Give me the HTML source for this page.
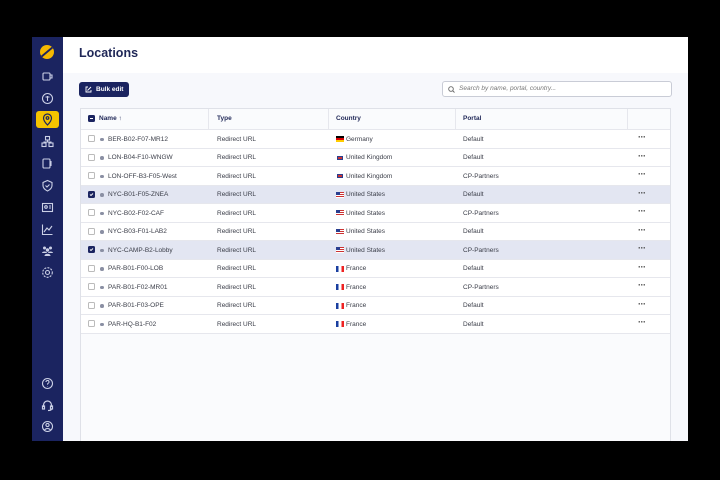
<!DOCTYPE html>
<html><head><meta charset="utf-8">
<style>
*{margin:0;padding:0;box-sizing:border-box}
body{width:720px;height:480px;background:#000;position:relative;overflow:hidden;font-family:"Liberation Sans",sans-serif;}
#side{position:absolute;left:32px;top:37px;width:31px;height:404px;background:#1b2460;}
#main{position:absolute;left:63px;top:37px;width:625px;height:404px;background:#f7f8fc;}
#hdr{position:absolute;left:0;top:0;width:625px;height:36px;background:#fff;}
h1{position:absolute;left:16px;top:9px;font-size:12.5px;font-weight:bold;color:#1f2757;}
.ic{position:absolute;left:9px;width:13px;height:13px;opacity:.9}
.btn{position:absolute;left:16px;top:45px;width:50px;height:15px;background:#1b2460;border-radius:3px;color:#fff;font-size:6.5px;font-weight:bold;line-height:15px;padding-left:17px}
.search{position:absolute;left:379px;top:44px;width:230px;height:16px;background:#fff;border:1px solid #c9ccd6;border-radius:3px;font-size:6.5px;font-style:italic;color:#777;line-height:14px;padding-left:16px}
#tbl{position:absolute;left:17px;top:71px;width:591px;height:333px;border:1px solid #dfe1e8;border-bottom:none;background:#fafbfd}
.row{position:absolute;left:0;width:589px;height:18.5px;border-bottom:1px solid #e6e7ed;background:#fff;font-size:6.5px;color:#3a3d48;}
.row span{position:absolute;top:5.5px}
.sel{background:#e3e6f2}
.th{background:#fafbfd;font-weight:bold;color:#1f2757;height:21px}
.vd{position:absolute;top:0;width:1px;height:223px;background:#e6e7ed}
.cb{position:absolute;left:7px;top:5px;width:7px;height:7px;border:1px solid #bbb;border-radius:1.5px;background:#fff}
.cb.on{background:#1b2460;border-color:#1b2460}
.dot{position:absolute;left:19px;top:7.5px;width:3.5px;height:3.5px;border-radius:50%;background:#8a8fa3}
.fl{position:absolute;left:255px;top:6px;width:8px;height:6px}
.el{position:absolute;left:557px;top:2px;font-size:9px;font-weight:bold;letter-spacing:-0.5px;color:#444}
</style></head><body>
<div id="side">
 <div style="position:absolute;left:8px;top:8px;width:14px;height:14px;border-radius:50%;background:#f5b800;overflow:hidden"><div style="position:absolute;left:-2px;top:6px;width:18px;height:2px;background:#1b2460;transform:rotate(-40deg)"></div></div>
 <svg class="ic" style="top:33px" viewBox="0 0 13 13" fill="none" stroke="#dfe3f5" stroke-width="1.1"><rect x="2" y="3" width="7" height="7" rx="1"/><path d="M9 5h2v3H9"/></svg>
 <svg class="ic" style="top:55px" viewBox="0 0 13 13" fill="none" stroke="#dfe3f5" stroke-width="1.1"><circle cx="6.5" cy="6.5" r="5"/><path d="M6.5 4v5M4.5 5h4"/></svg>
 <div style="position:absolute;left:4px;top:74px;width:23px;height:17px;background:#f5c400;border-radius:3px"></div>
 <svg class="ic" style="top:76px;opacity:1" viewBox="0 0 13 13" fill="none" stroke="#1b2460" stroke-width="1.2"><path d="M6.5 12s4-4 4-7a4 4 0 0 0-8 0c0 3 4 7 4 7z"/><circle cx="6.5" cy="5" r="1.3"/></svg>
 <svg class="ic" style="top:98px" viewBox="0 0 13 13" fill="none" stroke="#dfe3f5" stroke-width="1.1"><rect x="4.5" y="1.5" width="4" height="3.5"/><rect x="1" y="8" width="4" height="3.5"/><rect x="8" y="8" width="4" height="3.5"/><path d="M6.5 5v2M3 8V7h7v1"/></svg>
 <svg class="ic" style="top:120px" viewBox="0 0 13 13" fill="none" stroke="#dfe3f5" stroke-width="1.1"><rect x="2" y="2" width="7" height="9" rx="1"/><path d="M10 4v5"/></svg>
 <svg class="ic" style="top:142px" viewBox="0 0 13 13" fill="none" stroke="#dfe3f5" stroke-width="1.1"><path d="M6.5 1.5l4.5 2v3c0 3-2.5 4.5-4.5 5.5C4.5 11 2 9.5 2 6.5v-3z"/><path d="M4.5 6.5l1.5 1.5 2.5-2.5"/></svg>
 <svg class="ic" style="top:164px" viewBox="0 0 13 13" fill="none" stroke="#dfe3f5" stroke-width="1.1"><rect x="1.5" y="2.5" width="10" height="8"/><circle cx="5" cy="6" r="1.3"/><path d="M8 5h2M8 7h2"/></svg>
 <svg class="ic" style="top:186px" viewBox="0 0 13 13" fill="none" stroke="#dfe3f5" stroke-width="1.1"><path d="M1.5 1.5v10h10M3 9l3-4 2 2 3-4"/></svg>
 <svg class="ic" style="top:207px" viewBox="0 0 13 13" fill="#dfe3f5"><circle cx="3.5" cy="4" r="1.5"/><circle cx="9.5" cy="4" r="1.5"/><circle cx="6.5" cy="6" r="1.7"/><path d="M1 9c0-2 5-2 5 0zM7 9c0-2 5-2 5 0zM3.5 12c0-3 6-3 6 0z"/></svg>
 <svg class="ic" style="top:229px" viewBox="0 0 13 13" fill="none" stroke="#dfe3f5" stroke-width="1.1"><circle cx="6.5" cy="6.5" r="2"/><circle cx="6.5" cy="6.5" r="4.8" stroke-dasharray="2 1.2"/></svg>
 <svg class="ic" style="top:340px" viewBox="0 0 13 13" fill="none" stroke="#dfe3f5" stroke-width="1.1"><circle cx="6.5" cy="6.5" r="5"/><path d="M5 5a1.5 1.5 0 1 1 2 1.4c-.5.2-.5.6-.5 1.2M6.5 9.3v.3"/></svg>
 <svg class="ic" style="top:362px" viewBox="0 0 13 13" fill="none" stroke="#dfe3f5" stroke-width="1.2"><path d="M2.5 8V6a4 4 0 0 1 8 0v2"/><rect x="1.5" y="7" width="2" height="3"/><rect x="9.5" y="7" width="2" height="3"/><path d="M10.5 10c0 1.5-2 1.5-3.5 1.5"/></svg>
 <svg class="ic" style="top:383px" viewBox="0 0 13 13" fill="none" stroke="#dfe3f5" stroke-width="1.1"><circle cx="6.5" cy="6.5" r="5"/><circle cx="6.5" cy="5" r="1.6"/><path d="M3.5 10c1.5-2 4.5-2 6 0"/></svg>
</div>
<div id="main">
 <div id="hdr"><h1>Locations</h1></div>
 <div class="btn"><svg style="position:absolute;left:6px;top:4px" width="7" height="7" viewBox="0 0 7 7" fill="none" stroke="#fff" stroke-width="0.9"><path d="M3 1H1v5h5V4M2.5 4.5L6 1"/></svg>Bulk edit</div>
 <div class="search"><svg style="position:absolute;left:5px;top:4px" width="7" height="7" viewBox="0 0 7 7" fill="none" stroke="#666" stroke-width="0.9"><circle cx="3" cy="3" r="2.3"/><path d="M4.8 4.8L6.5 6.5"/></svg>Search by name, portal, country...</div>
 <div id="tbl">
  <div class="row th" style="top:0"><div class="cb on" style="top:6px"><div style="position:absolute;left:1px;top:2.2px;width:3px;height:1px;background:#fff"></div></div><span style="left:18px;top:6px">Name &#8593;</span><span style="left:136px;top:6px">Type</span><span style="left:255px;top:6px">Country</span><span style="left:382px;top:6px">Portal</span></div>
  <div class="vd" style="left:127px"></div><div class="vd" style="left:247px"></div><div class="vd" style="left:374px"></div><div class="vd" style="left:546px;height:21px"></div>
  <div id="rows"></div>
 </div>
</div>
<script>
var d=[["BER-B02-F07-MR12","de","Germany","Default",0],["LON-B04-F10-WNGW","uk","United Kingdom","Default",0],["LON-OFF-B3-F05-West","uk","United Kingdom","CP-Partners",0],["NYC-B01-F05-ZNEA","us","United States","Default",1],["NYC-B02-F02-CAF","us","United States","CP-Partners",0],["NYC-B03-F01-LAB2","us","United States","Default",0],["NYC-CAMP-B2-Lobby","us","United States","CP-Partners",1],["PAR-B01-F00-LOB","fr","France","Default",0],["PAR-B01-F02-MR01","fr","France","CP-Partners",0],["PAR-B01-F03-OPE","fr","France","Default",0],["PAR-HQ-B1-F02","fr","France","Default",0]];
var fl={de:'<div class="fl" style="background:linear-gradient(#000 33%,#d00 33% 66%,#fc0 66%)"></div>',uk:'<div class="fl" style="background:#2a3f8f;border:1.5px solid #fff;outline:1px solid #c33;outline-offset:-3.5px"></div>',us:'<div class="fl" style="background:repeating-linear-gradient(#c33 0 1px,#fff 1px 2px)"><div style="width:4px;height:3px;background:#2a3f8f"></div></div>',fr:'<div class="fl" style="background:linear-gradient(90deg,#1a3fa0 33%,#fff 33% 66%,#e22 66%)"></div>'};
var h='';d.forEach(function(r,i){h+='<div class="row'+(r[4]?' sel':'')+'" style="top:'+(21+i*18.5)+'px"><div class="cb'+(r[4]?' on':'')+'">'+(r[4]?'<svg width="5" height="5" style="position:absolute;left:0;top:0" viewBox="0 0 5 5" fill="none" stroke="#fff" stroke-width="0.9"><path d="M1 2.5l1 1 2-2"/></svg>':'')+'</div><div class="dot"></div><span style="left:27px">'+r[0]+'</span><span style="left:136px">Redirect URL</span>'+fl[r[1]]+'<span style="left:265px">'+r[2]+'</span><span style="left:382px">'+r[3]+'</span><div class="el">&middot;&middot;&middot;</div></div>';});
document.getElementById('rows').innerHTML=h;
</script>
</body></html>
